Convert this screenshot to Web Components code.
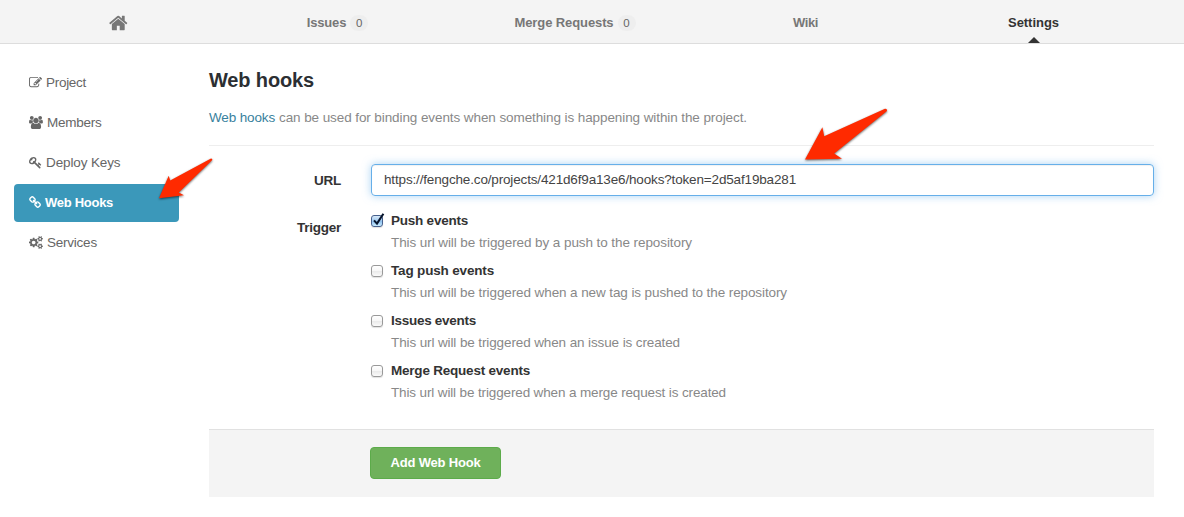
<!DOCTYPE html>
<html lang="en">
<head>
<meta charset="utf-8">
<title>Web hooks</title>
<style>
html,body{margin:0;height:100%;overflow:hidden;background:#fff}
body{font:13px/20px "Liberation Sans",Arial,sans-serif;color:#333}
</style>
</head>
<body>
<hooks-page></hooks-page>
<script>
const ICONS = {
  home: ['64 0 1664 1792', 'M1472 992v480q0 26-19 45t-45 19h-384v-384h-256v384h-384q-26 0-45-19t-19-45v-480q0-1 .5-3t.5-3l575-474 575 474q1 2 1 6zm223-69l-62 74q-8 9-21 11h-3q-13 0-21-7l-692-577-692 577q-12 8-24 7-13-2-21-11l-62-74q-8-10-7-23.5t11-21.5l719-599q32-26 76-26t76 26l244 204v-195q0-14 9-23t23-9h192q14 0 23 9t9 23v408l219 182q10 8 11 21.5t-7 23.5z'],
  edit: ['0 0 1792 1792', 'M888 1184l116-116-152-152-116 116v56h96v96h56zm440-720q-16-16-33 1l-350 350q-17 17-1 33t33-1l350-350q17-17 1-33zm80 594v190q0 119-84.5 203.5t-203.5 84.5h-832q-119 0-203.5-84.5t-84.5-203.5v-832q0-119 84.5-203.5t203.5-84.5h832q63 0 117 25 15 7 18 23 3 17-9 29l-49 49q-14 14-32 8-23-6-45-6h-832q-66 0-113 47t-47 113v832q0 66 47 113t113 47h832q66 0 113-47t47-113v-126q0-13 9-22l64-64q15-15 35-7t20 29zm-96-738l288 288-672 672h-288v-288zm444 132l-92 92-288-288 92-92q28-28 68-28t68 28l152 152q28 28 28 68t-28 68z'],
  users: ['0 0 1920 1792', 'M593 896q-162 5-265 128h-134q-82 0-138-40.5t-56-118.5q0-353 124-353 6 0 43.5 21t97.5 42.5 119 21.5q67 0 133-23-5 37-5 66 0 139 81 256zm1071 637q0 120-73 189.5t-194 69.5h-874q-121 0-194-69.5t-73-189.5q0-53 3.5-103.5t14-109 26.5-108.5 43-97.5 62-81 85.5-53.5 111.5-20q10 0 43 21.5t73 48 107 48 135 21.5 135-21.5 107-48 73-48 43-21.5q61 0 111.5 20t85.5 53.5 62 81 43 97.5 26.5 108.5 14 109 3.5 103.5zm-1024-1277q0 106-75 181t-181 75-181-75-75-181 75-181 181-75 181 75 75 181zm704 384q0 159-112.5 271.5t-271.5 112.5-271.5-112.5-112.5-271.5 112.5-271.5 271.5-112.5 271.5 112.5 112.5 271.5zm576 225q0 78-56 118.5t-138 40.5h-134q-103-123-265-128 81-117 81-256 0-29-5-66 66 23 133 23 59 0 119-21.5t97.5-42.5 43.5-21q124 0 124 353zm-128-609q0 106-75 181t-181 75-181-75-75-181 75-181 181-75 181 75 75 181z'],
  key: ['0 0 1792 1792', 'M832 512q0-80-56-136t-136-56-136 56-56 136q0 42 19 83-41-19-83-19-80 0-136 56t-56 136 56 136 136 56 136-56 56-136q0-42-19-83 41 19 83 19 80 0 136-56t56-136zm851 704q0 17-49 66t-66 49q-9 0-28.5-16t-36.5-33-38.5-40-24.5-26l-96 96 220 220q28 28 28 68 0 42-39 81t-81 39q-40 0-68-28l-671-671q-176 131-365 131-163 0-265.5-102.5t-102.5-265.5q0-160 95-313t248-248 313-95q163 0 265.5 102.5t102.5 265.5q0 189-131 365l355 355 96-96q-3-3-26-24.5t-40-38.5-33-36.5-16-28.5q0-17 49-66t66-49q13 0 23 10 6 6 46 44.5t82 79.5 86.5 86 73 78 28.5 41z'],
  link: ['64 0 1664 1792', 'M1520 1216q0-40-28-68l-208-208q-28-28-68-28-42 0-72 32 3 3 19 18.5t21.5 21.5 15 19 13 25.5 3.5 27.5q0 40-28 68t-68 28q-15 0-27.5-3.5t-25.5-13-19-15-21.5-21.5-18.5-19q-33 31-33 73 0 40 28 68l206 207q27 27 68 27 40 0 68-26l147-146q28-28 28-67zm-703-705q0-40-28-68l-206-207q-28-28-68-28-39 0-68 27l-147 146q-28 28-28 67 0 40 28 68l208 208q27 27 68 27 42 0 72-31-3-3-19-18.5t-21.5-21.5-15-19-13-25.5-3.5-27.5q0-40 28-68t68-28q15 0 27.5 3.5t25.5 13 19 15 21.5 21.5 18.5 19q33-31 33-73zm895 705q0 120-85 203l-147 146q-83 83-203 83-121 0-204-85l-206-207q-83-83-83-203 0-123 88-209l-88-88q-86 88-208 88-120 0-204-84l-208-208q-84-84-84-204t85-203l147-146q83-83 203-83 121 0 204 85l206 207q83 83 83 203 0 123-88 209l88 88q86-88 208-88 120 0 204 84l208 208q84 84 84 204z'],
  cogs: ['0 0 1920 1792', 'M896 896q0-106-75-181t-181-75-181 75-75 181 75 181 181 75 181-75 75-181zm768 512q0-52-38-90t-90-38-90 38-38 90q0 53 37.5 90.5t90.5 37.5 90.5-37.5 37.5-90.5zm0-1024q0-52-38-90t-90-38-90 38-38 90q0 53 37.5 90.5t90.5 37.5 90.5-37.5 37.5-90.5zm-384 421v185q0 10-7 19.5t-16 10.5l-155 24q-11 35-32 76 34 48 90 115 7 11 7 20 0 12-7 19-23 30-82.5 89.5t-78.5 59.5q-11 0-21-7l-115-90q-37 19-77 31-11 108-23 155-7 24-30 24h-186q-11 0-20-7.5t-10-17.5l-23-153q-34-10-75-31l-118 89q-7 7-20 7-11 0-21-8-144-133-144-160 0-9 7-19 10-14 41-53t47-61q-23-44-35-82l-152-24q-10-1-17-9.5t-7-19.5v-185q0-10 7-19.5t16-10.5l155-24q11-35 32-76-34-48-90-115-7-11-7-20 0-12 7-20 22-30 82-89t79-59q11 0 21 7l115 90q34-18 77-32 11-108 23-154 7-24 30-24h186q11 0 20 7.5t10 17.5l23 153q34 10 75 31l118-89q8-7 20-7 11 0 21 8 144 133 144 160 0 8-7 19-12 16-42 54t-45 60q23 48 34 82l152 23q10 2 17 10.5t7 19.5zm640 533v140q0 16-149 31-12 27-30 52 51 113 51 138 0 4-4 7-122 71-124 71-8 0-46-47t-52-68q-20 2-30 2t-30-2q-14 21-52 68t-46 47q-2 0-124-71-4-3-4-7 0-25 51-138-18-25-30-52-149-15-149-31v-140q0-16 149-31 13-29 30-52-51-113-51-138 0-4 4-7 4-2 35-20t59-34 30-16q8 0 46 46.5t52 67.5q20-2 30-2t30 2q51-71 92-112l6-2q4 0 124 70 4 3 4 7 0 25-51 138 17 23 30 52 149 15 149 31zm0-1024v140q0 16-149 31-12 27-30 52 51 113 51 138 0 4-4 7-122 71-124 71-8 0-46-47t-52-68q-20 2-30 2t-30-2q-14 21-52 68t-46 47q-2 0-124-71-4-3-4-7 0-25 51-138-18-25-30-52-149-15-149-31v-140q0-16 149-31 13-29 30-52-51-113-51-138 0-4 4-7 4-2 35-20t59-34 30-16q8 0 46 46.5t52 67.5q20-2 30-2t30 2q51-71 92-112l6-2q4 0 124 70 4 3 4 7 0 25-51 138 17 23 30 52 149 15 149 31z']
};

const define = (name, render, after) => customElements.define(name, class extends HTMLElement {
  connectedCallback() {
    if (this.shadowRoot) return;
    this.attachShadow({ mode: 'open' }).innerHTML = render(this);
    if (after) after(this);
  }
});

define('hooks-page', () => `
<style>
  :host{display:block;height:517px;position:relative}
  .cols{display:grid;grid-template-columns:165px 945px;column-gap:30px;padding:20px 0 0 14px}
  nav{display:flex;flex-direction:column;gap:2px}
  main{font-size:13.5px}
  h3{margin:4px 0 0;font-size:20px;line-height:24px;color:#2c2f33}
  p{margin:16px 0 0;color:#888;line-height:20px;padding-bottom:17px;border-bottom:1px solid #eee}
  a{color:#38819d}
  form{display:block;margin:18px 0 0}
  .row{display:grid;grid-template-columns:132px 783px;column-gap:30px}
  .row>b{text-align:right;line-height:20px;padding-top:7px}
  .row.trigger{margin-top:15px}
  .field{box-sizing:border-box;height:32px;border:1px solid #66afe9;border-radius:4px;padding:5px 12px;line-height:20px;color:#444;box-shadow:inset 0 1px 1px rgba(0,0,0,.06),0 0 8px rgba(102,175,233,.55)}
  .events{display:flex;flex-direction:column;gap:10px}
  .actions{box-sizing:border-box;height:68px;margin-top:28px;padding:17px 0 0 161px;background:#f4f4f4;border-top:1px solid #e1e1e1}
  hook-arrow{position:absolute;left:0;top:0}
</style>
<top-nav></top-nav>
<div class="cols">
  <nav>
    <side-item icon="edit" w="40">Project</side-item>
    <side-item icon="users" w="54.5">Members</side-item>
    <side-item icon="key" w="74.5">Deploy Keys</side-item>
    <side-item icon="link" w="68" active>Web Hooks</side-item>
    <side-item icon="cogs" w="50">Services</side-item>
  </nav>
  <main>
    <h3><fit-text w="105">Web hooks</fit-text></h3>
    <p><a><fit-text w="66">Web hooks</fit-text></a><fit-text w="468" style="margin-left:4px">can be used for binding events when something is happening within the project.</fit-text></p>
    <form>
      <div class="row"><b><fit-text w="27">URL</fit-text></b>
        <div class="field"><fit-text w="412">https://fengche.co/projects/421d6f9a13e6/hooks?token=2d5af19ba281</fit-text></div></div>
      <div class="row trigger"><b><fit-text w="44">Trigger</fit-text></b>
        <div class="events">
          <event-option w="77" dw="301" checked label="Push events">This url will be triggered by a push to the repository</event-option>
          <event-option w="103" dw="396" label="Tag push events">This url will be triggered when a new tag is pushed to the repository</event-option>
          <event-option w="85" dw="289" label="Issues events">This url will be triggered when an issue is created</event-option>
          <event-option w="139" dw="335" label="Merge Request events">This url will be triggered when a merge request is created</event-option>
        </div></div>
      <div class="actions"><save-button>Add Web Hook</save-button></div>
    </form>
  </main>
</div>
<hook-arrow></hook-arrow>`);

define('top-nav', () => `
<style>
  :host{display:grid;grid-template-columns:206px 233px 242px 219px 237px;padding-left:15px;height:43px;background:#f4f4f4;border-bottom:1px solid #ddd;color:#777;font-weight:bold}
  div{display:flex;justify-content:center;align-items:center;padding-top:2px;box-sizing:border-box;position:relative}
  i{font:11.5px/16px "Liberation Sans",Arial,sans-serif;width:18px;height:16px;border-radius:8px;background:#eee;text-align:center;margin-left:4px;color:#666}
  .on{color:#333}
  .on::after{content:"";position:absolute;bottom:0;left:calc(50% - 5.5px);border:6px solid transparent;border-top:0;border-bottom:6px solid #333}
</style>
<div><ui-icon name="home" size="20"></ui-icon></div>
<div><fit-text w="39.5">Issues</fit-text><i>0</i></div>
<div><fit-text w="99">Merge Requests</fit-text><i>0</i></div>
<div><fit-text w="25">Wiki</fit-text></div>
<div class="on"><fit-text w="51">Settings</fit-text></div>`);

define('side-item', el => `
<style>
  :host{display:flex;align-items:center;box-sizing:border-box;height:38px;padding-left:15px;border-radius:4px;color:#666;font-size:13.5px}
  :host([active]){background:#3b98ba;color:#fff;font-weight:bold;font-size:13px}
  ui-icon{margin-top:-2px}
  fit-text{margin-left:4px}
</style>
<ui-icon name="${el.getAttribute('icon')}" size="13"></ui-icon><fit-text w="${el.getAttribute('w')}">${el.textContent}</fit-text>`);

define('event-option', el => `
<style>
  :host{display:grid;grid-template-columns:12px 1fr;column-gap:8px;height:40px}
  .box{box-sizing:border-box;width:12px;height:12px;margin-top:4px;border:1px solid #999;border-radius:3px;background:linear-gradient(#fff,#f6f6f6 50%,#e9e9e9 50%,#fafafa);box-shadow:0 1px 1px rgba(0,0,0,.12)}
  :host([checked]) .box{border-color:#47608c;background:linear-gradient(#d8eafa,#9fc8ee 50%,#8abcec 50%,#c8ecff)}
  svg{display:none;overflow:visible;margin:-3px 0 0 0}
  :host([checked]) svg{display:block}
  .t{display:block;font-weight:bold;height:20px;line-height:20px}
  .d{display:block;line-height:20px;margin-top:2px;color:#888}
</style>
<div class="box"><svg width="13" height="13"><path d="M2 7.4 5 10.6 11.4 .8" fill="none" stroke="#06142c" stroke-width="2.1"/></svg></div>
<div><span class="t"><fit-text w="${el.getAttribute('w')}">${el.getAttribute('label')}</fit-text></span>
<span class="d"><fit-text w="${el.getAttribute('dw')}">${el.textContent}</fit-text></span></div>`);

define('save-button', el => `
<style>
  :host{display:flex;justify-content:center;align-items:center;box-sizing:border-box;width:131px;height:32px;border:1px solid #5cab4a;border-radius:4px;background:#6fb15b;color:#fff;font-weight:bold;font-size:13px}
</style>
<fit-text w="90">${el.textContent}</fit-text>`);

define('hook-arrow', () => `
<style>:host{display:block;pointer-events:none}svg{display:block;overflow:visible;filter:drop-shadow(0 1.5px 1.2px rgba(0,0,0,.6))}</style>
<svg width="1184" height="517" fill="#ff2a00">
  <path d="M805 159.6 822.4 127.2 824.2 136.3 885 108.8Q887.4 108.6 887 111L834.2 153.4 842 158.7Z"/>
  <path d="M159 198.2 168.7 175.7 170.2 180.6 211 158.5Q212.6 158.4 212.3 160L178.8 192.6 184 195.3Z"/>
</svg>`);

define('ui-icon', el => {
  const [box, d] = ICONS[el.getAttribute('name')], size = +el.getAttribute('size');
  return `<style>:host{display:block}svg{display:block;overflow:visible}</style>
<svg viewBox="${box}" width="${box.split(' ')[2] / 1792 * size}" height="${size}" fill="currentColor"><path d="${d}"/></svg>`;
});

/* One line of text, tracked so that it fills the width given in "w". */
define('fit-text', () => `<style>:host{display:inline-block;white-space:nowrap}</style><slot></slot>`, el => {
  const w = +el.getAttribute('w'), n = el.textContent.length;
  el.style.letterSpacing = (w - el.getBoundingClientRect().width) / n + 'px';
});
</script>
</body>
</html>
